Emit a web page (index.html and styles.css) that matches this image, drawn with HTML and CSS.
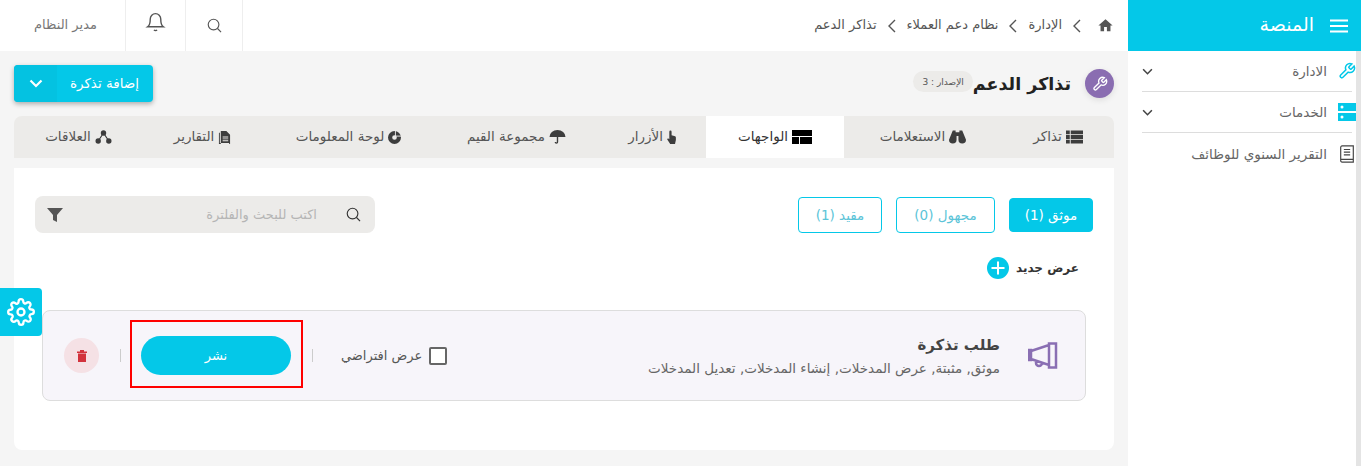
FILE: index.html
```html
<!DOCTYPE html>
<html lang="ar" dir="rtl">
<head>
<meta charset="UTF-8">
<title>تذاكر الدعم</title>
<link rel="stylesheet" href="styles.css">
</head>
<body>
<aside class="sidebar">
  <div class="brand">
    <svg class="brand-icon" viewBox="0 0 18 14"><path d="M0 1.500h18M0 7h18M0 12.500h18" stroke="#fff" stroke-width="2"/></svg>
    <span>المنصة</span>
  </div>
  <div class="side-scroll"></div>
  <nav class="side-nav">
    <div class="side-item">
      <svg class="side-icon" viewBox="0 0 24 24" fill="none" stroke="#04c8e8" stroke-width="2"><path d="M14.700 6.300a1 1 0 0 0 0 1.400l1.600 1.600a1 1 0 0 0 1.400 0l3.770-3.770a6 6 0 0 1-7.940 7.940l-6.910 6.910a2.120 2.120 0 0 1-3-3l6.910-6.910a6 6 0 0 1 7.940-7.940l-3.760 3.760z"/></svg>
      <span class="side-label">الادارة</span>
      <svg class="side-arrow" viewBox="0 0 12 8" fill="none" stroke="#444" stroke-width="1.800"><path d="M1 1.500l5 5 5-5"/></svg>
    </div>
    <div class="side-item">
      <svg class="side-icon" viewBox="0 0 18 18"><path fill="#04c8e8" d="M0 0h18v8H0zM0 10h18v8H0z"/><circle cx="4" cy="4" r="1.500" fill="#fff"/><circle cx="4" cy="14" r="1.500" fill="#fff"/></svg>
      <span class="side-label">الخدمات</span>
      <svg class="side-arrow" viewBox="0 0 12 8" fill="none" stroke="#444" stroke-width="1.800"><path d="M1 1.500l5 5 5-5"/></svg>
    </div>
    <div class="side-item no-line">
      <svg class="side-icon" viewBox="0 0 18 20" fill="none" stroke="#444" stroke-width="1.300"><path d="M2 16V2.500A1.500 1.500 0 0 1 3.500 1H16v18H3.500A1.500 1.500 0 0 1 2 17.500zM2 16h14M5.500 5h7M5.500 8h7M5.500 11h7"/></svg>
      <span class="side-label">التقرير السنوي للوظائف</span>
    </div>
  </nav>
</aside>

<div class="page">
  <header class="topbar">
    <div class="crumbs">
      <svg class="home" viewBox="0 0 24 24"><path fill="#555" d="M10 20v-6h4v6h5v-8h3L12 3 2 12h3v8z"/></svg>
      <svg class="crumb-sep" viewBox="0 0 8 14" fill="none" stroke="#555" stroke-width="1.400"><path d="M7 1L1 7l6 6"/></svg>
      <span>الإدارة</span>
      <svg class="crumb-sep" viewBox="0 0 8 14" fill="none" stroke="#555" stroke-width="1.400"><path d="M7 1L1 7l6 6"/></svg>
      <span>نظام دعم العملاء</span>
      <svg class="crumb-sep" viewBox="0 0 8 14" fill="none" stroke="#555" stroke-width="1.400"><path d="M7 1L1 7l6 6"/></svg>
      <span>تذاكر الدعم</span>
    </div>
    <div class="top-actions">
      <div class="top-btn search-btn">
        <svg class="top-icon" viewBox="0 0 16 16" fill="none" stroke="#555" stroke-width="1.200"><circle cx="7" cy="7" r="5.700"/><path d="M11.200 11.200L15 15"/></svg>
      </div>
      <div class="top-btn bell-btn">
        <svg class="bell" viewBox="0 0 24 24" fill="none" stroke="#555" stroke-width="1.600"><path d="M18 9A6 6 0 0 0 6 9c0 7-3 9-3 9h18s-3-2-3-9M13.700 21.500a2 2 0 0 1-3.400 0"/></svg>
      </div>
      <div class="user">مدير النظام</div>
    </div>
  </header>

  <main class="content">
    <div class="head-row">
      <div class="page-title">
        <span class="title-icon">
          <svg viewBox="0 0 24 24" fill="none" stroke="#fff" stroke-width="2"><path d="M14.700 6.300a1 1 0 0 0 0 1.400l1.600 1.600a1 1 0 0 0 1.400 0l3.770-3.770a6 6 0 0 1-7.940 7.940l-6.910 6.910a2.120 2.120 0 0 1-3-3l6.910-6.910a6 6 0 0 1 7.940-7.940l-3.760 3.760z"/></svg>
        </span>
        <h1>تذاكر الدعم</h1>
        <span class="version">الإصدار : 3</span>
      </div>
      <div class="add-btn">
        <span class="add-label">إضافة تذكرة</span>
        <span class="add-arrow">
          <svg viewBox="0 0 14 9" fill="none" stroke="#fff" stroke-width="2.200"><path d="M1.500 1.500L7 7l5.500-5.500"/></svg>
        </span>
      </div>
    </div>

    <div class="tabs">
      <div class="tab">
        <svg class="tab-icon" viewBox="0 0 18 14"><path fill="#3d3d3d" d="M0 0h4v4H0zM5 0h13v4H5zM0 5h4v4H0zM5 5h13v4H5zM0 10h4v4H0zM5 10h13v4H5z"/></svg>
        <span>تذاكر</span>
      </div>
      <div class="tab">
        <svg class="tab-icon" viewBox="0 0 18 14"><path fill="#3d3d3d" d="M4 0h3v2h4V0h3l4 10a4 4 0 0 1-8 0V6H8v4a4 4 0 0 1-8 0z"/></svg>
        <span>الاستعلامات</span>
      </div>
      <div class="tab active">
        <svg class="tab-icon wide" viewBox="0 0 20 14"><path fill="#000" d="M0 0h20v6H0zM0 7h7v7H0zM8 7h12v7H8z"/></svg>
        <span>الواجهات</span>
      </div>
      <div class="tab">
        <svg class="tab-icon hand" viewBox="0 0 10 16"><path fill="#3d3d3d" d="M2.500 2a1.300 1.300 0 0 1 2.600 0v4l4 1.200c.6.200.9.700.9 1.300v3L9 16H3.500L0 10.500l1-1 1.500 1z"/></svg>
        <span>الأزرار</span>
      </div>
      <div class="tab">
        <svg class="tab-icon" viewBox="0 0 16 14"><path fill="#3d3d3d" d="M0 7a8 7 0 0 1 16 0zM7.300 7h1.400v5a1.800 1.800 0 0 1-3.600 0h1.300a.45.45 0 0 0 .9 0z"/></svg>
        <span>مجموعة القيم</span>
      </div>
      <div class="tab">
        <svg class="tab-icon small" viewBox="0 0 14 14"><path fill-rule="evenodd" fill="#3d3d3d" d="M7 0a7 7 0 1 1-7 7 7 7 0 0 1 7-7zm0 4.500A2.500 2.500 0 1 0 9.500 7 2.500 2.500 0 0 0 7 4.500z"/><path d="M8 0v5.500h6" fill="none" stroke="#ecebe9" stroke-width="1"/></svg>
        <span>لوحة المعلومات</span>
      </div>
      <div class="tab">
        <svg class="tab-icon small" viewBox="0 0 12 14"><path fill-rule="evenodd" fill="#3d3d3d" d="M2 0h6l4 4v10H2zM4 6v1h6V6zM4 8v1h6V8zM4 10v1h6v-1zM0 2h1v11h10v1H0z"/></svg>
        <span>التقارير</span>
      </div>
      <div class="tab">
        <svg class="tab-icon" viewBox="0 0 16 14"><circle cx="8" cy="3" r="2.700" fill="#3d3d3d"/><circle cx="2.700" cy="11" r="2.700" fill="#3d3d3d"/><circle cx="13.300" cy="11" r="2.700" fill="#3d3d3d"/><path d="M8 3L2.700 11M8 3l5.300 8" stroke="#3d3d3d" stroke-width="1.200"/></svg>
        <span>العلاقات</span>
      </div>
    </div>

    <section class="panel">
      <div class="filters">
        <div class="status-group">
          <div class="status on">موثق (1)</div>
          <div class="status">مجهول (0)</div>
          <div class="status">مقيد (1)</div>
        </div>
        <div class="search-box">
          <svg class="search-icon" viewBox="0 0 16 16" fill="none" stroke="#333" stroke-width="1.200"><circle cx="7" cy="7" r="5.700"/><path d="M11.200 11.200L15 15"/></svg>
          <span class="search-text">اكتب للبحث والفلترة</span>
          <svg class="funnel" viewBox="0 0 16 14"><path fill="#555" d="M0 0h16L10 7v7L6 12V7z"/></svg>
        </div>
      </div>

      <div class="new-view">
        <span>عرض جديد</span>
        <svg class="plus" viewBox="0 0 22 22"><circle cx="11" cy="11" r="11" fill="#04c8e8"/><path d="M11 4.500v13M4.500 11h13" stroke="#fff" stroke-width="2"/></svg>
      </div>

      <div class="view-card">
        <div class="view-info">
          <svg class="mega" viewBox="0 0 30 27" fill="none" stroke="#8a6fb3" stroke-width="2.500"><path d="M1 8h2v10H1zM3 9L21 3v20L3 17zM21 1.500h7v24h-7zM8 19v2a3 3 0 0 0 6 0"/></svg>
          <div class="view-text">
            <h3>طلب تذكرة</h3>
            <p>موثق, مثبتة, عرض المدخلات, إنشاء المدخلات, تعديل المدخلات</p>
          </div>
        </div>
        <div class="view-actions">
          <label class="default-check">
            <span class="box"></span>
            <span>عرض افتراضي</span>
          </label>
          <span class="divider"></span>
          <div class="publish">نشر</div>
          <span class="divider"></span>
          <div class="trash">
            <svg viewBox="0 0 10 12"><path fill="#d2323c" d="M0 1.500h3V0h4v1.500h3V3H0zM1 3.500h8V12H1z"/></svg>
          </div>
        </div>
      </div>
    </section>
  </main>
</div>

<div class="settings-tab">
  <svg viewBox="0 0 24 24" fill="none" stroke="#fff" stroke-width="2"><circle cx="12" cy="12" r="3"/><path d="M19.400 15a1.650 1.650 0 0 0 .33 1.820l.06.06a2 2 0 1 1-2.830 2.830l-.06-.06a1.650 1.650 0 0 0-2.800 1.170V21a2 2 0 1 1-4 0v-.09A1.650 1.650 0 0 0 7.300 19.700l-.06.06a2 2 0 1 1-2.830-2.830l.06-.06a1.650 1.650 0 0 0-1.170-2.800H3a2 2 0 1 1 0-4h.09A1.650 1.650 0 0 0 4.300 7.300l-.06-.06a2 2 0 1 1 2.830-2.830l.06.06a1.650 1.650 0 0 0 2.800-1.170V3a2 2 0 1 1 4 0v.09a1.650 1.650 0 0 0 2.800 1.170l.06-.06a2 2 0 1 1 2.830 2.830l-.06.06a1.650 1.650 0 0 0 1.170 2.800H21a2 2 0 1 1 0 4h-.09a1.650 1.650 0 0 0-1.510 1z"/></svg>
</div>
<div class="highlight"></div>
</body>
</html>
```

FILE: styles.css
```css
* {
  box-sizing: border-box;
}

html, body {
  height: 100%;
}

body {
  margin: 0;
  display: flex;
  height: 466px;
  overflow: hidden;
  font-family: "DejaVu Sans", sans-serif;
  font-size: 13px;
  color: #555;
  background-color: #f5f5f5;
}

/* sidebar */
.sidebar {
  position: relative;
  flex: 0 0 233px;
  background-color: #fff;
}

.brand {
  height: 51px;
  display: flex;
  align-items: center;
  gap: 16px;
  padding-right: 13px;
  background-color: #04c8e8;
  color: #fff;
  font-size: 19px;
}

.brand span {
  padding-bottom: 3px;
}

.brand-icon {
  width: 18px;
  height: 14px;
}

.side-scroll {
  position: absolute;
  top: 51px;
  right: 0;
  bottom: 0;
  width: 5px;
  background-color: #e4e4e4;
}

.side-nav {
  position: relative;
  padding: 0 9px 0 14px;
}

.side-item {
  height: 41px;
  display: flex;
  align-items: center;
  border-bottom: 1px solid #ddd;
  color: #666;
  font-size: 13.5px;
}

.side-item.no-line {
  border-bottom: none;
}

.side-icon {
  flex: none;
  width: 18px;
  height: 18px;
  margin-left: 11px;
  margin-right: -4px;
}

.side-label {
  flex: 1;
}

.side-arrow {
  width: 11px;
  height: 7px;
}

/* top bar */
.page {
  flex: 1;
  min-width: 0;
}

.topbar {
  height: 51px;
  display: flex;
  justify-content: space-between;
  background-color: #fff;
}

.crumbs {
  display: flex;
  align-items: center;
  gap: 10px;
  padding-right: 14px;
  font-size: 13px;
  color: #555;
}

.crumbs span {
  padding-bottom: 3px;
}

.home {
  width: 17px;
  height: 17px;
  margin-left: 5px;
}

.crumb-sep {
  width: 8px;
  height: 14px;
  margin: 0 1px;
}

.top-actions {
  display: flex;
}

.top-btn {
  display: flex;
  align-items: center;
  justify-content: center;
}

.search-btn {
  width: 58px;
  border-left: 1px solid #eee;
  border-right: 1px solid #eee;
}

.bell-btn {
  width: 60px;
  border-left: 1px solid #eee;
}

.top-icon {
  width: 15px;
  height: 15px;
}

.bell {
  width: 21px;
  height: 21px;
  margin-top: -9px;
}

.user {
  width: 125px;
  display: flex;
  align-items: center;
  justify-content: center;
  padding: 0 0 3px 6px;
  color: #777;
}

/* page head */
.content {
  padding: 14px 14px 0;
}

.head-row {
  height: 37px;
  display: flex;
  justify-content: space-between;
  align-items: center;
}

.page-title {
  display: flex;
  align-items: center;
}

.title-icon {
  width: 29px;
  height: 29px;
  display: flex;
  align-items: center;
  justify-content: center;
  margin-left: 14px;
  border-radius: 50%;
  background-color: #8a6db1;
  box-shadow: 0 2px 6px rgba(0, 0, 0, 0.1);
}

.title-icon svg {
  width: 16px;
  height: 16px;
}

.page-title h1 {
  margin: 0;
  font-size: 17.5px;
  font-weight: bold;
  color: #222;
}

.version {
  height: 21px;
  display: flex;
  align-items: center;
  padding: 0 9px;
  margin-top: -4px;
  border-radius: 11px;
  background-color: #ecebe9;
  font-size: 9px;
  color: #555;
}

.add-btn {
  width: 139px;
  height: 37px;
  display: flex;
  align-items: center;
  border-radius: 4px;
  background-color: #04c8e8;
  color: #fff;
  font-size: 13.5px;
  box-shadow: 0 2px 5px rgba(0, 0, 0, 0.3);
}

.add-label {
  flex: 1;
  white-space: nowrap;
  padding: 0 14px 2px 0;
}

.add-arrow {
  flex: none;
  width: 43px;
  height: 100%;
  display: flex;
  align-items: center;
  justify-content: center;
  background-color: #04c2e1;
  border-radius: 4px 0 0 4px;
}

.add-arrow svg {
  width: 14px;
  height: 9px;
}

/* tabs */
.tabs {
  margin-top: 14px;
  height: 42px;
  display: grid;
  grid-template-columns: 112px 158px 138px 108px 163px 173px 119px 129px;
  border-radius: 8px 8px 0 0;
  background-color: #ecebe9;
  overflow: hidden;
  font-size: 13.5px;
}

.tab {
  display: flex;
  align-items: center;
  justify-content: center;
  gap: 4px;
  white-space: nowrap;
  color: #555;
}

.tab span {
  padding-bottom: 2px;
}

.tab.active {
  background-color: #fff;
  color: #333;
}

.tab-icon {
  width: 17px;
  height: 14px;
}

.tab-icon.wide {
  width: 20px;
}

.tab-icon.small {
  width: 13px;
  height: 13px;
}

.tab-icon.hand {
  width: 9px;
}

/* panel */
.panel {
  margin-top: 10px;
  height: 282px;
  padding: 28px 21px 0;
  border-radius: 0 0 8px 8px;
  background-color: #fff;
}

.filters {
  display: flex;
  justify-content: space-between;
  align-items: center;
}

.status-group {
  display: flex;
  align-items: center;
  gap: 14px;
}

.status {
  width: 84px;
  height: 36px;
  display: flex;
  align-items: center;
  justify-content: center;
  border: 1px solid #04c8e8;
  border-radius: 4px;
  font-size: 13.5px;
  color: #5cc4d8;
}

.status:nth-child(2) {
  width: 99px;
}

.status.on {
  height: 34px;
  background-color: #04c8e8;
  color: #fff;
}

.search-box {
  width: 340px;
  height: 37px;
  display: flex;
  align-items: center;
  padding: 0 14px 0 12px;
  border-radius: 8px;
  background-color: #ecebe9;
}

.search-icon {
  width: 15px;
  height: 15px;
}

.search-text {
  flex: 1;
  padding-right: 29px;
  color: #b5b5b5;
}

.funnel {
  width: 16px;
  height: 14px;
}

.new-view {
  display: flex;
  align-items: center;
  gap: 7px;
  margin-top: 24px;
  padding-right: 14px;
  font-size: 12px;
  font-weight: bold;
  color: #333;
}

.plus {
  width: 22px;
  height: 22px;
}

/* view card */
.view-card {
  margin: 31px 7px 0;
  height: 91px;
  display: flex;
  justify-content: space-between;
  align-items: center;
  padding: 0 27px 0 21px;
  border: 1px solid #ddd;
  border-radius: 8px;
  background-color: #f7f5fa;
}

.view-info {
  display: flex;
  align-items: center;
  gap: 28px;
}

.mega {
  width: 30px;
  height: 27px;
}

.view-text h3 {
  margin: 0 0 6px;
  font-size: 15px;
  color: #444;
}

.view-text p {
  margin: 0;
  font-size: 13.5px;
  color: #666;
}

.view-actions {
  display: flex;
  align-items: center;
}

.default-check {
  display: flex;
  align-items: center;
  gap: 7px;
  margin-left: 28px;
}

.box {
  width: 18px;
  height: 18px;
  border: 2px solid #666;
  border-radius: 2px;
  background-color: #fff;
}

.divider {
  width: 1px;
  height: 13px;
  background-color: #ccc;
}

.publish {
  width: 150px;
  height: 39px;
  display: flex;
  align-items: center;
  justify-content: center;
  margin: 0 21px 0 20px;
  border-radius: 20px;
  background-color: #04c8e8;
  color: #fff;
}

.trash {
  width: 35px;
  height: 35px;
  display: flex;
  align-items: center;
  justify-content: center;
  margin-right: 21px;
  border-radius: 50%;
  background-color: #f5e1e5;
}

.trash svg {
  width: 10px;
  height: 12px;
}

/* overlays */
.settings-tab {
  position: absolute;
  left: 0;
  top: 288px;
  width: 42px;
  height: 48px;
  display: flex;
  align-items: center;
  justify-content: center;
  border-radius: 0 4px 4px 0;
  background-color: #04c8e8;
}

.settings-tab svg {
  width: 28px;
  height: 28px;
}

.highlight {
  position: absolute;
  left: 130px;
  top: 320px;
  width: 173px;
  height: 68px;
  border: 2px solid #f00;
}
```
